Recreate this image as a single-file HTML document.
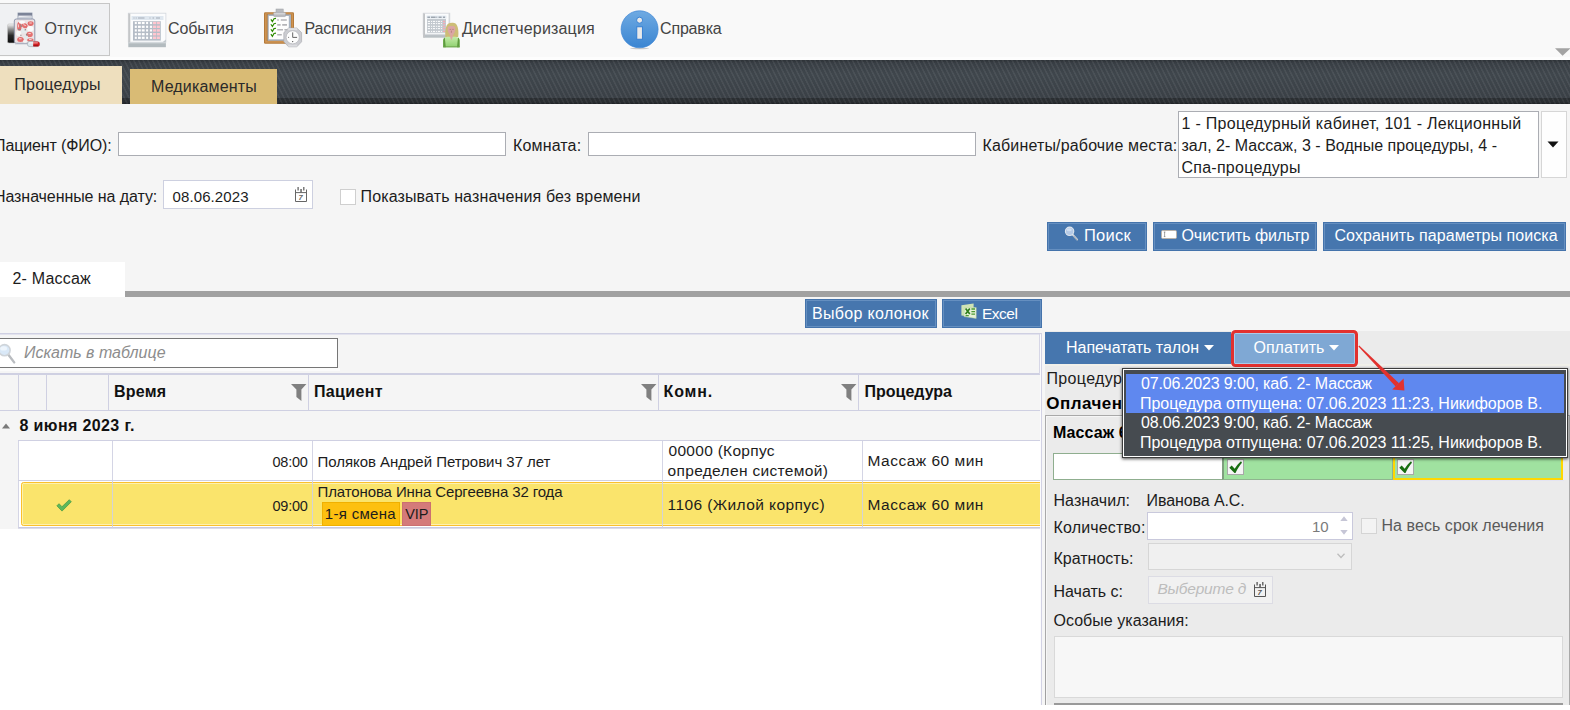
<!DOCTYPE html><html lang="ru"><head><meta charset="utf-8"><title>Отпуск процедур</title><style>
html,body{margin:0;padding:0;}
body{width:1570px;height:710px;overflow:hidden;position:relative;background:#f5f5f5;font-family:"Liberation Sans", sans-serif;}
#root{position:absolute;left:0;top:0;width:1570px;height:710px;overflow:hidden;}
#root div{position:absolute;box-sizing:border-box;}
#root svg{position:absolute;overflow:visible;}
.t{position:absolute;white-space:nowrap;line-height:1;}
</style></head><body><div id="root"><div style="left:0px;top:0px;width:1570px;height:60px;background:#f9f9f9;"></div>
<div style="left:-1px;top:3px;width:111px;height:53px;background:#f0f1f3;border:1px solid #c6c6c6;"></div>
<div style="left:0px;top:57px;width:1570px;height:3px;background:#fdfdfd;"></div>
<div style="left:0px;top:60px;width:1570px;height:44px;background:repeating-linear-gradient(63.4deg,rgba(255,255,255,0.055) 0,rgba(255,255,255,0.055) 1.1px,rgba(0,0,0,0.03) 1.6px,rgba(0,0,0,0.03) 3.7px,rgba(255,255,255,0.055) 4.2px),linear-gradient(#2e3338 0,#3a4046 3px,#41484e 14px,#3c4248 38px);"></div>
<div style="left:0px;top:98px;width:1570px;height:6px;background:repeating-linear-gradient(63.4deg,rgba(255,255,255,0.055) 0,rgba(255,255,255,0.055) 1.1px,rgba(0,0,0,0.03) 1.6px,rgba(0,0,0,0.03) 3.7px,rgba(255,255,255,0.055) 4.2px),linear-gradient(#2b2f33 0,#2b2f33 4px,#1f2225 6px);"></div>
<div style="left:0px;top:66px;width:122px;height:38px;background:#eedfbe;"></div>
<div style="left:130px;top:69px;width:147px;height:35px;background:#d9bb75;"></div>
<svg style="left:0;top:0" width="760" height="60" viewBox="0 0 760 60"><defs>
<linearGradient id="gcap" x1="0" y1="0" x2="0" y2="1"><stop offset="0" stop-color="#f4f4f4"/><stop offset="0.25" stop-color="#9a9a9a"/><stop offset="0.6" stop-color="#2a2a2a"/><stop offset="1" stop-color="#0c0c0c"/></linearGradient>
<linearGradient id="ginfo" x1="0" y1="0" x2="0" y2="1"><stop offset="0" stop-color="#6faae2"/><stop offset="1" stop-color="#3a85d2"/></linearGradient>
<linearGradient id="ggreen" x1="0" y1="0" x2="0" y2="1"><stop offset="0" stop-color="#c4eca8"/><stop offset="1" stop-color="#8fd070"/></linearGradient>
<linearGradient id="gclip" x1="0" y1="0" x2="0" y2="1"><stop offset="0" stop-color="#e2e2e4"/><stop offset="1" stop-color="#a9abb0"/></linearGradient>
</defs><g>
<filter id="fb" x="-20%" y="-20%" width="140%" height="140%"><feGaussianBlur stdDeviation="0.35"/></filter>
<rect x="7.5" y="24" width="8" height="19" rx="1.5" fill="url(#gcap)" stroke="#c2c2c2" stroke-width="0.6"/>
<rect x="18" y="13" width="14" height="7.5" fill="#eceef3" stroke="#8c94a8" stroke-width="0.8"/>
<rect x="18" y="13" width="14" height="2.6" fill="#7c8498"/>
<path d="M18.6 17.2l12.8-1.2v2.4l-12.8 0.6z" fill="#cdd1da"/>
<rect x="14.3" y="19" width="20.5" height="24.3" rx="2" fill="#ebe2e4" stroke="#8690a6" stroke-width="0.9"/>
<g filter="url(#fb)">
<ellipse cx="19.3" cy="26.5" rx="2.2" ry="4.4" fill="#e26c6c"/>
<ellipse cx="24.6" cy="25.6" rx="3.2" ry="2.4" fill="#e47070" transform="rotate(28 24.6 25.6)"/>
<ellipse cx="30.6" cy="23.6" rx="3" ry="2.3" fill="#e26c6c"/>
<ellipse cx="22" cy="22.3" rx="3" ry="1.5" fill="#fafafa"/>
<ellipse cx="30.3" cy="28.8" rx="3.2" ry="2.7" fill="#fbfbfb"/>
<ellipse cx="24" cy="31.2" rx="2.8" ry="2.4" fill="#e6ebed"/>
<ellipse cx="29.6" cy="34.4" rx="3.2" ry="2.6" fill="#e47070"/>
<ellipse cx="18.6" cy="33.2" rx="2.6" ry="2.8" fill="#f7f7f7"/>
<ellipse cx="20.5" cy="39.4" rx="3.3" ry="2.5" fill="#e26c6c"/>
<ellipse cx="25.8" cy="37.3" rx="2.4" ry="2" fill="#e4e9eb"/>
<ellipse cx="30.4" cy="39.9" rx="3.2" ry="1.7" fill="#e07272"/>
<ellipse cx="25" cy="41.4" rx="2" ry="1.3" fill="#f4f4f4"/>
<path d="M20.8 24.6l0.6 2.6M20.6 29.6h-2.4M26 29.6l-1.4 0.4M26.2 34l1 1.6M20.6 34.8l0.6 1" stroke="#8f8585" stroke-width="1.1" fill="none"/><path d="M18.4 24.4v3M23.4 24.6l2.4 1M29.4 23h2.4M28.4 33.6h2.4M19 38.8h2.6M29 39.4h2.6" stroke="#f7d6d6" stroke-width="1" fill="none"/>
</g>
<rect x="27.3" y="41.4" width="12.4" height="5.2" rx="2.6" fill="#dbe6ec" stroke="#8f9aa2" stroke-width="0.5"/>
<path d="M33.2 41.4h3.9a2.6 2.6 0 0 1 0 5.2h-3.9z" fill="#d21e22"/>
<rect x="28.5" y="42.2" width="9.5" height="1.2" rx="0.6" fill="#fff" opacity="0.55"/>
<rect x="33.2" y="45" width="5" height="1.2" rx="0.6" fill="#7a0c10" opacity="0.55"/>
<rect x="15" y="43.7" width="12.5" height="0.9" fill="#c9ccd2" opacity="0.8"/>
</g><g><rect x="128.3" y="41" width="37.6" height="6.2" fill="#b3bbbf"/><rect x="128.3" y="41" width="37.6" height="2.4" fill="#cfd5d8"/><rect x="128.3" y="13.2" width="37.6" height="29" fill="#fbfcfd" stroke="#d3d7dc" stroke-width="0.8"/><rect x="128.3" y="13.5" width="2" height="29" fill="#c4c6c8"/><rect x="131.5" y="16" width="32" height="4" fill="#dfe7ef"/><path d="M133.5 18h1M135.7 18h1M138 18h6.5M149.5 18h1M152.5 18h1.6M156 18h4" stroke="#a3acb7" stroke-width="1.2"/><rect x="133" y="21.2" width="27.8" height="19.4" fill="#b5bdc7"/><rect x="134.8" y="21.9" width="2" height="2.2" fill="#fff"/><rect x="138.0" y="21.9" width="2.8" height="2.2" fill="#fff"/><rect x="141.8" y="21.9" width="2.8" height="2.2" fill="#fff"/><rect x="146.1" y="21.9" width="2" height="2.2" fill="#fff"/><rect x="149.9" y="21.9" width="2.2" height="2.2" fill="#fff"/><rect x="153.0" y="21.8" width="3.1" height="2.4" fill="#ffc6cf"/><rect x="156.8" y="21.8" width="3.1" height="2.4" fill="#ffc6cf"/><rect x="134.8" y="25.7" width="2" height="2.2" fill="#fff"/><rect x="138.0" y="25.7" width="2.8" height="2.2" fill="#fff"/><rect x="141.8" y="25.7" width="2.8" height="2.2" fill="#fff"/><rect x="146.1" y="25.7" width="2" height="2.2" fill="#fff"/><rect x="149.9" y="25.7" width="2.2" height="2.2" fill="#fff"/><rect x="153.0" y="25.6" width="3.1" height="2.4" fill="#ffc6cf"/><rect x="156.8" y="25.6" width="3.1" height="2.4" fill="#ffc6cf"/><rect x="134.8" y="29.3" width="2" height="2.2" fill="#fff"/><rect x="138.0" y="29.3" width="2.8" height="2.2" fill="#fff"/><rect x="141.8" y="29.3" width="2.8" height="2.2" fill="#fff"/><rect x="146.1" y="29.3" width="2" height="2.2" fill="#fff"/><rect x="149.9" y="29.3" width="2.2" height="2.2" fill="#fff"/><rect x="153.0" y="29.2" width="3.1" height="2.4" fill="#ffc6cf"/><rect x="156.8" y="29.2" width="3.1" height="2.4" fill="#ffc6cf"/><rect x="134.8" y="33.1" width="2" height="2.2" fill="#fff"/><rect x="138.0" y="33.1" width="2.8" height="2.2" fill="#fff"/><rect x="141.8" y="33.1" width="2.8" height="2.2" fill="#fff"/><rect x="146.1" y="33.1" width="2" height="2.2" fill="#fff"/><rect x="149.9" y="33.1" width="2.2" height="2.2" fill="#fff"/><rect x="153.0" y="33.0" width="3.1" height="2.4" fill="#ffc6cf"/><rect x="156.8" y="33.0" width="3.1" height="2.4" fill="#ffc6cf"/><rect x="134.8" y="36.7" width="2" height="2.2" fill="#fff"/><rect x="138.0" y="36.7" width="2.8" height="2.2" fill="#fff"/><rect x="141.8" y="36.7" width="2.8" height="2.2" fill="#fff"/><rect x="146.1" y="36.7" width="2" height="2.2" fill="#fff"/><rect x="149.9" y="36.7" width="2.2" height="2.2" fill="#fff"/><rect x="153.0" y="36.6" width="3.1" height="2.4" fill="#ffc6cf"/><rect x="156.8" y="36.6" width="3.1" height="2.4" fill="#ffc6cf"/><path d="M162.5 42.2l3.4-2.6v2.6z" fill="#c2c8cc"/></g><g>
<rect x="264" y="12.2" width="30" height="31.6" rx="1.2" fill="#b47a3a"/>
<rect x="265.2" y="13.4" width="27.6" height="29.2" fill="#d59a58"/>
<rect x="266.6" y="14" width="25" height="27.2" fill="#b07636"/>
<rect x="267.6" y="14.4" width="23.4" height="26.4" fill="#a9b4c2"/>
<rect x="268.8" y="16" width="20" height="23.3" fill="#fdfdfd"/>
<rect x="276" y="9" width="7.2" height="4" fill="#b9bbbf" stroke="#9d9fa4" stroke-width="0.5"/>
<rect x="273.6" y="12.4" width="12" height="4.2" rx="0.8" fill="url(#gclip)" stroke="#9b9da3" stroke-width="0.5"/>
<path d="M270.9 19.4l1.5 2.2 1.6-2.8 2-0.4M270.9 24.3l1.5 2.2 1.6-2.8 2-0.4M270.9 29.2l1.5 2.2 1.6-2.8 2-0.4M270.9 34.1l1.5 2.2 1.6-2.8 2-0.4" stroke="#2c8a00" stroke-width="1.15" fill="none"/>
<path d="M277.2 20h1.6M280.8 20h6M277.2 24.9h3.4M282.2 24.9h4.8M277.2 29.8h5.8M284.4 29.8h3M277.2 34.7h4.6" stroke="#b4b4b8" stroke-width="1.6"/>
<path d="M288.6 28h8.2l4.8 4.6v9.2l-4.8 5h-8.2l-4.8-5v-9.2z" fill="#cbccd1" stroke="#a3a5aa" stroke-width="0.6"/>
<rect x="288.2" y="28.2" width="9" height="2" fill="#e1e2e5"/><rect x="288.2" y="44.6" width="9" height="2" fill="#dcdde0"/>
<circle cx="292.7" cy="37.3" r="6.6" fill="#fdfdfd" stroke="#b7b9be" stroke-width="0.8"/>
<path d="M292.7 32.4v5h4.4" stroke="#555" stroke-width="0.9" fill="none"/>
<circle cx="292.7" cy="41.6" r="0.6" fill="#333"/><circle cx="288.6" cy="37.3" r="0.5" fill="#555"/>
</g><g><rect x="423.2" y="33.5" width="26.6" height="4.2" fill="#b9c0c4"/><rect x="423.2" y="33.5" width="26.6" height="1.6" fill="#d5dadd"/><rect x="423.2" y="13.2" width="26.6" height="21" fill="#fbfcfd" stroke="#d0d4d9" stroke-width="0.8"/><rect x="423.2" y="13.5" width="1.8" height="24" fill="#c2c4c6"/><rect x="448.6" y="13.5" width="1.2" height="21" fill="#d2d4d6"/><rect x="426.6" y="15.6" width="19.8" height="3" fill="#e2e8ef"/><path d="M427.4 17.2h2.6M431 17.2h4.6M436.4 17.2h0.8M438.6 17.2h3M443 17.2h2" stroke="#7f8893" stroke-width="1"/><rect x="427" y="19" width="19" height="13.8" fill="#c3c9cf"/><rect x="427.8" y="20.9" width="2.2" height="1" fill="#fff"/><rect x="431.0" y="20.9" width="1" height="1" fill="#fff"/><rect x="432.9" y="20.9" width="2.2" height="1" fill="#fff"/><rect x="436.1" y="20.9" width="1" height="1" fill="#fff"/><rect x="437.9" y="20.9" width="2.2" height="1" fill="#fff"/><rect x="441.1" y="20.9" width="1" height="1" fill="#fff"/><rect x="443.0" y="20.8" width="2.1" height="1.2" fill="#f5a8b2"/><rect x="427.8" y="23.1" width="2.2" height="1" fill="#fff"/><rect x="431.0" y="23.1" width="1" height="1" fill="#fff"/><rect x="432.9" y="23.1" width="2.2" height="1" fill="#fff"/><rect x="436.1" y="23.1" width="1" height="1" fill="#fff"/><rect x="437.9" y="23.1" width="2.2" height="1" fill="#fff"/><rect x="441.1" y="23.1" width="1" height="1" fill="#fff"/><rect x="443.0" y="23.0" width="2.1" height="1.2" fill="#f5a8b2"/><rect x="427.8" y="25.8" width="2.2" height="1" fill="#fff"/><rect x="431.0" y="25.8" width="1" height="1" fill="#fff"/><rect x="432.9" y="25.8" width="2.2" height="1" fill="#fff"/><rect x="436.1" y="25.8" width="1" height="1" fill="#fff"/><rect x="437.9" y="25.8" width="2.2" height="1" fill="#fff"/><rect x="441.1" y="25.8" width="1" height="1" fill="#fff"/><rect x="443.0" y="25.7" width="2.1" height="1.2" fill="#f5a8b2"/><rect x="427.8" y="28.1" width="2.2" height="1" fill="#fff"/><rect x="431.0" y="28.1" width="1" height="1" fill="#fff"/><rect x="432.9" y="28.1" width="2.2" height="1" fill="#fff"/><rect x="436.1" y="28.1" width="1" height="1" fill="#fff"/><rect x="437.9" y="28.1" width="2.2" height="1" fill="#fff"/><rect x="441.1" y="28.1" width="1" height="1" fill="#fff"/><rect x="443.0" y="28.0" width="2.1" height="1.2" fill="#f5a8b2"/><rect x="427.8" y="30.9" width="2.2" height="1" fill="#fff"/><rect x="431.0" y="30.9" width="1" height="1" fill="#fff"/><rect x="432.9" y="30.9" width="2.2" height="1" fill="#fff"/><rect x="436.1" y="30.9" width="1" height="1" fill="#fff"/><rect x="437.9" y="30.9" width="2.2" height="1" fill="#fff"/><rect x="441.1" y="30.9" width="1" height="1" fill="#fff"/><rect x="443.0" y="30.8" width="2.1" height="1.2" fill="#f5a8b2"/><path d="M445.4 37c-0.6-5 0.2-11.4 2.6-13.2 2.2-1.4 6-1.4 7.8 0 2.4 2 3 8.4 2.4 13.2z" fill="#cdbd76"/><path d="M447.8 27.2c0.6-1.6 6.6-1.6 7.3 0 0.5 2.6-0.2 5.4-1.4 6.6l-0.6 1.6h-3.2l-0.6-1.6c-1.2-1.2-2-4-1.5-6.6z" fill="#dba6a4"/><path d="M449.6 29.4h1.6M452.2 29.4h1.6M451.4 30.6v2.2" stroke="#b97f80" stroke-width="0.9" fill="none"/><path d="M443.2 47.2v-6.6c0-2.2 1.6-3.6 4.2-3.9h8c2.6 0.3 4.2 1.7 4.2 3.9v6.6z" fill="url(#ggreen)"/><path d="M443.2 47.2v-6.6c0-1.4 0.6-2.4 1.6-3.1l1 9.7zM459.6 47.2v-6.6c0-1.4-0.6-2.4-1.6-3.1l-1 9.7z" fill="#5e9c3e"/><path d="M449.6 35.4l1.8 5 1.8-5z" fill="#dba6a4"/><rect x="443.2" y="46.4" width="16.4" height="0.9" fill="#6aa04a"/></g><g>
<ellipse cx="639.6" cy="48.6" rx="9.6" ry="0.7" fill="#c9c9c9"/>
<circle cx="639.6" cy="29.3" r="18.5" fill="url(#ginfo)" stroke="#3f86d6" stroke-width="0.7"/>
<circle cx="639.6" cy="20.2" r="3" fill="#e9e9e9" stroke="#2d7ad2" stroke-width="0.9"/>
<rect x="636.8" y="26.8" width="5.6" height="12.4" fill="#e9e9e9" stroke="#2d7ad2" stroke-width="0.9"/>
</g></svg>
<svg style="left:1555px;top:48px" width="16" height="9"><path d="M0 0.3H15.4L7.6 7.8Z" fill="#a3a3a3"/></svg>
<div style="left:118px;top:132px;width:388px;height:24px;background:#fff;border:1px solid #abadb3;"></div>
<div style="left:588px;top:132px;width:388px;height:24px;background:#fff;border:1px solid #abadb3;"></div>
<div style="left:1178px;top:111px;width:361px;height:67px;background:#fff;border:1px solid #abadb3;"></div>
<div style="left:1541px;top:111px;width:26px;height:67px;background:#fefefe;border:1px solid #d6d6d6;"></div>
<svg style="left:1547px;top:141px" width="12" height="7"><path d="M0.5 0.5H11.5L6 6.5Z" fill="#111"/></svg>
<div style="left:163px;top:180px;width:150px;height:29px;background:#fff;border:1px solid #cdd0e0;"></div>
<div style="left:340px;top:189px;width:16px;height:16px;background:#fff;border:1px solid #cfcfcf;"></div>
<div style="left:1047px;top:222px;width:100px;height:29px;background:#4676ae;border:1px solid #4473ab;box-shadow:inset 0 0 0 1px #658fc0;"></div>
<div style="left:1153px;top:222px;width:164px;height:29px;background:#4676ae;border:1px solid #4473ab;box-shadow:inset 0 0 0 1px #658fc0;"></div>
<div style="left:1323px;top:222px;width:243px;height:29px;background:#4676ae;border:1px solid #4473ab;box-shadow:inset 0 0 0 1px #658fc0;"></div>
<div style="left:0px;top:262px;width:125px;height:35px;background:#fff;"></div>
<div style="left:125px;top:291px;width:1445px;height:6px;background:#a1a1a1;"></div>
<div style="left:805px;top:299px;width:132px;height:29px;background:#4676ae;border:1px solid #4473ab;box-shadow:inset 0 0 0 1px #658fc0;"></div>
<div style="left:942px;top:299px;width:100px;height:29px;background:#4676ae;border:1px solid #4473ab;box-shadow:inset 0 0 0 1px #658fc0;"></div>
<div style="left:0px;top:333px;width:1042px;height:1px;background:#cfd0e2;"></div>
<div style="left:0px;top:334px;width:1040px;height:1px;background:#e3e3ee;"></div>
<div style="left:0px;top:373px;width:1040px;height:2px;background:#cfd0e2;"></div>
<div style="left:1039px;top:334px;width:1px;height:40px;background:#d6d6e6;"></div>
<div style="left:0px;top:368px;width:340px;height:3px;background:#fbfbfb;"></div>
<div style="left:-2px;top:338px;width:340px;height:30px;background:#fff;border:1px solid #767676;"></div>
<div style="left:18px;top:375px;width:1px;height:35px;background:#cfd0e2;"></div>
<div style="left:46px;top:375px;width:1px;height:35px;background:#cfd0e2;"></div>
<div style="left:108px;top:375px;width:1px;height:35px;background:#cfd0e2;"></div>
<div style="left:308px;top:375px;width:1px;height:35px;background:#cfd0e2;"></div>
<div style="left:658px;top:375px;width:1px;height:35px;background:#cfd0e2;"></div>
<div style="left:858px;top:375px;width:1px;height:35px;background:#cfd0e2;"></div>
<div style="left:0px;top:410px;width:1040px;height:1px;background:#cfd0e2;"></div>
<svg style="left:2px;top:423px" width="8" height="6"><path d="M0 5.5L4 0.5L8 5.5Z" fill="#7a7a7a"/></svg>
<div style="left:18px;top:440px;width:1022px;height:1px;background:#cfd0e2;"></div>
<div style="left:18px;top:441px;width:1022px;height:39px;background:#fff;"></div>
<div style="left:18px;top:480px;width:1022px;height:1px;background:#cfd0e2;"></div>
<div style="left:18px;top:481px;width:1022px;height:46px;background:#fff;"></div>
<div style="left:21px;top:482px;width:1024px;height:44px;background:#fae46c;border:1px solid #fbc02d;border-radius:2.5px;box-shadow:inset 0 0 0 1px #fdf1b0;"></div>
<div style="left:18px;top:527px;width:1022px;height:1px;background:#c9cade;"></div>
<div style="left:18px;top:528px;width:1022px;height:1px;background:#dcdcea;"></div>
<div style="left:0px;top:529px;width:1040px;height:181px;background:#fff;"></div>
<div style="left:18px;top:441px;width:1px;height:87px;background:#cfd0e2;opacity:0.9;"></div>
<div style="left:112px;top:441px;width:1px;height:87px;background:#cfd0e2;opacity:0.9;"></div>
<div style="left:312px;top:441px;width:1px;height:87px;background:#cfd0e2;opacity:0.9;"></div>
<div style="left:662px;top:441px;width:1px;height:87px;background:#cfd0e2;opacity:0.9;"></div>
<div style="left:862px;top:441px;width:1px;height:87px;background:#cfd0e2;opacity:0.9;"></div>
<div style="left:322px;top:502px;width:78px;height:24px;background:#fdc010;border:1px solid #f0b000;"></div>
<div style="left:402px;top:502px;width:29px;height:24px;background:#d47a7a;border:1px solid #cc7070;"></div>
<svg style="left:56px;top:499px" width="16" height="13" viewBox="0 0 16 13"><path d="M0.9 6.8L3 4.7L6 7.7L13.3 0.7L15.3 2.8L6 12.1Z" fill="#5cb85c" stroke="#3f973f" stroke-width="0.7"/></svg>
<div style="left:1040px;top:335px;width:1px;height:370px;background:#fbfbfd;"></div>
<div style="left:1041px;top:333px;width:1px;height:372px;background:#d2d2e4;"></div>
<div style="left:1042px;top:334px;width:3px;height:371px;background:#f6f6f6;"></div>
<div style="left:1045px;top:331px;width:525px;height:374px;background:#ebebeb;"></div>
<div style="left:1045px;top:364px;width:525px;height:2px;background:#f1f0ea;"></div>
<div style="left:1045px;top:332px;width:186px;height:32px;background:#4676ae;"></div>
<svg style="left:1204px;top:345px" width="10" height="6"><path d="M0 0H10L5 5.5Z" fill="#fff"/></svg>
<div style="left:1231px;top:330px;width:127px;height:37px;background:#7fa8d4;border:3px solid #e2312f;border-radius:4.5px;box-shadow:inset 0 0 0 1px #a9cbea;"></div>
<svg style="left:1329px;top:345px" width="10" height="6"><path d="M0 0H10L5 5.5Z" fill="#fff"/></svg>
<div style="left:1045px;top:415px;width:525px;height:295px;background:#ebebeb;border:1px solid #a9a9a9;box-shadow:inset 1px 1px 0 #f6f6f6;"></div>
<div style="left:1053px;top:453px;width:171px;height:27px;background:#fff;border:1px solid #8fae8f;"></div>
<div style="left:1222px;top:453px;width:171px;height:27px;background:#a0e2a0;border:1px solid #8fb48f;border-left:2px solid #7f9f7f;"></div>
<div style="left:1393px;top:453px;width:170px;height:27px;background:#a0e2a0;border:2px solid #ffd700;"></div>
<div style="left:1393px;top:480px;width:171px;height:1px;background:#e4e4f2;"></div>
<div style="left:1227px;top:459px;width:17px;height:16px;background:#f5f5f5;border:1px solid #a8a8a8;"></div>
<div style="left:1397px;top:459px;width:17px;height:16px;background:#f5f5f5;border:1px solid #a8a8a8;"></div>
<svg style="left:1228px;top:459px" width="16" height="16" viewBox="0 0 16 16"><path d="M1.3 8.7L3.7 6.6L6.7 9.8C8.4 6.9 10.4 4.5 13 2.3L14 3.7C11.4 6.6 9.5 9.7 7.5 14.1L6.5 14.1Z" fill="#176d10"/></svg>
<svg style="left:1398px;top:459px" width="16" height="16" viewBox="0 0 16 16"><path d="M1.3 8.7L3.7 6.6L6.7 9.8C8.4 6.9 10.4 4.5 13 2.3L14 3.7C11.4 6.6 9.5 9.7 7.5 14.1L6.5 14.1Z" fill="#176d10"/></svg>
<div style="left:1147px;top:512px;width:206px;height:28px;background:#fff;border:1px solid #c9c9dc;"></div>
<svg style="left:1340px;top:516px" width="8" height="19"><path d="M0.3 5L4 0.2L7.7 5Z M0.3 14L4 18.8L7.7 14Z" fill="#c6c6d6"/></svg>
<div style="left:1361px;top:518px;width:16px;height:16px;background:#f3f3f3;border:1px solid #d4d4d4;"></div>
<div style="left:1148px;top:543px;width:204px;height:27px;background:#f0f0f0;border:1px solid #d6d6d6;"></div>
<svg style="left:1337px;top:553px" width="8" height="6"><path d="M0.5 0.8L4 4.5L7.5 0.8" fill="none" stroke="#bdbdbd" stroke-width="1.3"/></svg>
<div style="left:1148px;top:576px;width:125px;height:28px;background:#f1f1f1;border:1px solid #dcdce4;"></div>
<div style="left:1054px;top:636px;width:509px;height:62px;background:#f7f7f7;border:1px solid #d9d9d9;"></div>
<div style="left:1054px;top:703px;width:509px;height:2px;background:#9a9a9a;"></div>
<div style="left:1045px;top:660px;width:1px;height:45px;background:#a0a0a0;"></div>
<div style="left:0px;top:705px;width:1570px;height:5px;background:#fff;z-index:9;"></div>
<div style="left:1122px;top:368px;width:446px;height:90px;background:#464b50;border:1px solid #3c3c3c;box-shadow:inset 0 0 0 1px #fff,0 1px 3px rgba(0,0,0,0.7);z-index:5;"></div>
<div style="left:1126px;top:374px;width:438px;height:39px;background:#5f88ef;z-index:6;"></div>
<svg style="left:0;top:0;z-index:8" width="1570" height="710"><path d="M1359.2 345.6L1358.4 346.6L1395.6 386.4L1399 383.2Z" fill="#e2322f"/><path d="M1404.4 390.4L1403.6 378.4L1392.2 389.6Z" fill="#e2322f"/></svg>
<svg style="left:295px;top:187px" width="12" height="15" viewBox="0 0 12 15"><path d="M0.5 2.5V14.5H11.5V2.5M0.5 5.6H11.5" fill="none" stroke="#666" stroke-width="1"/><path d="M3.1 0V3.6M8.8 0V3.6" stroke="#666" stroke-width="1.3"/><rect x="5.3" y="2" width="1.5" height="3.4" fill="#666"/><text x="3.6" y="12.8" font-family="Liberation Sans, sans-serif" font-size="7.5" font-weight="700" font-style="italic" fill="#666">7</text></svg>
<svg style="left:1254px;top:582px" width="12" height="15" viewBox="0 0 12 15"><path d="M0.5 2.5V14.5H11.5V2.5M0.5 5.6H11.5" fill="none" stroke="#555" stroke-width="1"/><path d="M3.1 0V3.6M8.8 0V3.6" stroke="#555" stroke-width="1.3"/><rect x="5.3" y="2" width="1.5" height="3.4" fill="#555"/><text x="3.6" y="12.8" font-family="Liberation Sans, sans-serif" font-size="7.5" font-weight="700" font-style="italic" fill="#555">7</text></svg>
<svg style="left:290.7px;top:384px" width="16" height="18" viewBox="0 0 16 18"><path d="M0 0H15.4L10.4 5.6V17L5.4 13V5.6Z" fill="#808080"/></svg>
<svg style="left:640.8px;top:384px" width="16" height="18" viewBox="0 0 16 18"><path d="M0 0H15.4L10.4 5.6V17L5.4 13V5.6Z" fill="#808080"/></svg>
<svg style="left:841px;top:384px" width="16" height="18" viewBox="0 0 16 18"><path d="M0 0H15.4L10.4 5.6V17L5.4 13V5.6Z" fill="#808080"/></svg>
<svg style="left:-3px;top:343px" width="20" height="22" viewBox="0 0 20 22"><path d="M11.6 12L17.2 19.4" stroke="#b9bcc0" stroke-width="2.4" stroke-linecap="round"/><circle cx="7.5" cy="7.2" r="5.6" fill="#d9e8f7" stroke="#cfd4d9" stroke-width="1.6"/><ellipse cx="6.6" cy="5.4" rx="3.4" ry="2.2" fill="#eef5fc"/></svg>
<svg style="left:1063px;top:225px" width="17" height="18" viewBox="0 0 17 18"><path d="M9.6 9.6L14.2 14.6" stroke="#d8dde3" stroke-width="1.8" stroke-linecap="round"/><path d="M10.4 10.8L14.6 15.4" stroke="#6b7785" stroke-width="0.7"/><circle cx="6.6" cy="6.3" r="4.2" fill="#b4c9e6" stroke="#dfe6ee" stroke-width="1.1"/><ellipse cx="6.2" cy="4.8" rx="2.6" ry="1.5" fill="#cfdef2"/></svg>
<svg style="left:1161px;top:230px" width="16" height="9" viewBox="0 0 16 9"><rect x="0.5" y="0.5" width="15" height="8" rx="1.2" fill="#fff" stroke="#b9b2aa" stroke-width="1"/><path d="M3.6 2V6.6M2.8 2H4.4M2.8 6.6H4.4" stroke="#666" stroke-width="0.6" fill="none"/></svg>
<svg style="left:961px;top:303px" width="16" height="16" viewBox="0 0 16 16"><path d="M0.4 2.2L12.6 0.4V13.8L0.4 12.4Z" fill="#cfe4b4"/><path d="M3.4 4.6H15.2V15.4L3 13.6Z" fill="#e6f2d6" stroke="#b7cf9a" stroke-width="0.5"/><path d="M4.6 5.6L8.8 11M8.8 5.6L4.6 11" stroke="#2f7d1c" stroke-width="1.7"/><path d="M10.4 6h3.6M10.4 8.6h3.6M10.4 11.2h3.6M4.6 12.6h3.2" stroke="#4e9a35" stroke-width="1.3"/></svg>
<span class="t" style="left:14.3px;top:77px;font-size:16px;color:#2a2a2a;letter-spacing:0.238px;">Процедуры</span>
<span class="t" style="left:151px;top:79px;font-size:16px;color:#2a2a2a;letter-spacing:0.150px;">Медикаменты</span>
<span class="t" style="left:44.5px;top:21px;font-size:16px;color:#444;letter-spacing:0.300px;">Отпуск</span>
<span class="t" style="left:168px;top:21px;font-size:16px;color:#444;letter-spacing:-0.083px;">События</span>
<span class="t" style="left:304.5px;top:21px;font-size:16px;color:#444;letter-spacing:-0.111px;">Расписания</span>
<span class="t" style="left:462px;top:21px;font-size:16px;color:#444;letter-spacing:0.179px;">Диспетчеризация</span>
<span class="t" style="left:660px;top:21px;font-size:16px;color:#444;letter-spacing:-0.167px;">Справка</span>
<span class="t" style="left:-6px;top:138px;font-size:16px;color:#1c1c1c;letter-spacing:-0.115px;">Пациент (ФИО):</span>
<span class="t" style="left:513px;top:138px;font-size:16px;color:#1c1c1c;letter-spacing:0.143px;">Комната:</span>
<span class="t" style="left:982.5px;top:138px;font-size:16px;color:#1c1c1c;letter-spacing:0.159px;">Кабинеты/рабочие места:</span>
<span class="t" style="left:1181.5px;top:116px;font-size:16px;color:#1c1c1c;letter-spacing:0.287px;">1 - Процедурный кабинет, 101 - Лекционный</span>
<span class="t" style="left:1181.5px;top:138px;font-size:16px;color:#1c1c1c;letter-spacing:0.025px;">зал, 2- Массаж, 3 - Водные процедуры, 4 -</span>
<span class="t" style="left:1181.5px;top:160px;font-size:16px;color:#1c1c1c;letter-spacing:0.250px;">Спа-процедуры</span>
<span class="t" style="left:-6px;top:189px;font-size:16px;color:#1c1c1c;letter-spacing:-0.079px;">Назначенные на дату:</span>
<span class="t" style="left:172.5px;top:189px;font-size:15px;color:#1c1c1c;letter-spacing:0.111px;">08.06.2023</span>
<span class="t" style="left:360.5px;top:189px;font-size:16px;color:#1c1c1c;letter-spacing:0.125px;">Показывать назначения без времени</span>
<span class="t" style="left:1084px;top:227px;font-size:16.5px;color:#fff;letter-spacing:0.250px;">Поиск</span>
<span class="t" style="left:1181.5px;top:228px;font-size:16px;color:#fff;letter-spacing:-0.071px;">Очистить фильтр</span>
<span class="t" style="left:1334.5px;top:228px;font-size:16px;color:#fff;letter-spacing:0.060px;">Сохранить параметры поиска</span>
<span class="t" style="left:12.5px;top:271px;font-size:16px;color:#1c1c1c;letter-spacing:0.188px;">2- Массаж</span>
<span class="t" style="left:812px;top:306px;font-size:16px;color:#fff;letter-spacing:0.333px;">Выбор колонок</span>
<span class="t" style="left:982px;top:306px;font-size:15.5px;color:#fff;letter-spacing:-0.500px;">Excel</span>
<span class="t" style="left:24px;top:345px;font-size:16px;color:#8d8d8d;font-style:italic;letter-spacing:0.000px;">Искать в таблице</span>
<span class="t" style="left:114px;top:384px;font-size:16px;color:#111;font-weight:700;letter-spacing:0.250px;">Время</span>
<span class="t" style="left:314px;top:384px;font-size:16px;color:#111;font-weight:700;letter-spacing:0.333px;">Пациент</span>
<span class="t" style="left:663.5px;top:384px;font-size:16px;color:#111;font-weight:700;letter-spacing:0.875px;">Комн.</span>
<span class="t" style="left:864.5px;top:384px;font-size:16px;color:#111;font-weight:700;letter-spacing:0.000px;">Процедура</span>
<span class="t" style="left:19.5px;top:418px;font-size:16px;color:#111;font-weight:700;letter-spacing:0.385px;">8 июня 2023 г.</span>
<span class="t" style="left:272.5px;top:455px;font-size:14.5px;color:#1c1c1c;letter-spacing:-0.250px;">08:00</span>
<span class="t" style="left:317.5px;top:454px;font-size:15px;color:#1c1c1c;letter-spacing:-0.034px;">Поляков Андрей Петрович 37 лет</span>
<span class="t" style="left:668.5px;top:443px;font-size:15.5px;color:#1c1c1c;letter-spacing:0.292px;">00000 (Корпус</span>
<span class="t" style="left:667.5px;top:463px;font-size:15.5px;color:#1c1c1c;letter-spacing:0.333px;">определен системой)</span>
<span class="t" style="left:867.5px;top:453px;font-size:15.5px;color:#1c1c1c;letter-spacing:0.500px;">Массаж 60 мин</span>
<span class="t" style="left:272.5px;top:499px;font-size:14.5px;color:#1c1c1c;letter-spacing:-0.250px;">09:00</span>
<span class="t" style="left:317.5px;top:484px;font-size:15px;color:#1c1c1c;letter-spacing:-0.113px;">Платонова Инна Сергеевна 32 года</span>
<span class="t" style="left:324.8px;top:506px;font-size:15px;color:#1c1c1c;letter-spacing:0.312px;">1-я смена</span>
<span class="t" style="left:405.2px;top:507px;font-size:14.5px;color:#1c1c1c;letter-spacing:-0.100px;">VIP</span>
<span class="t" style="left:667.5px;top:497px;font-size:15.5px;color:#1c1c1c;letter-spacing:0.417px;">1106 (Жилой корпус)</span>
<span class="t" style="left:867.5px;top:497px;font-size:15.5px;color:#1c1c1c;letter-spacing:0.500px;">Массаж 60 мин</span>
<span class="t" style="left:1066px;top:340px;font-size:16px;color:#fff;letter-spacing:-0.033px;">Напечатать талон</span>
<span class="t" style="left:1253.5px;top:340px;font-size:16px;color:#fff;letter-spacing:0.000px;">Оплатить</span>
<span class="t" style="left:1046.5px;top:371px;font-size:16px;color:#1c1c1c;letter-spacing:0.357px;">Процедура:</span>
<span class="t" style="left:1046.3px;top:395px;font-size:17px;color:#000;font-weight:700;letter-spacing:0.450px;">Оплачено:</span>
<span class="t" style="left:1053px;top:425px;font-size:16px;color:#000;font-weight:700;letter-spacing:0.100px;">Массаж 60 мин</span>
<span class="t" style="left:1053.5px;top:493px;font-size:16px;color:#1c1c1c;letter-spacing:0.062px;">Назначил:</span>
<span class="t" style="left:1146.5px;top:493px;font-size:16px;color:#1c1c1c;letter-spacing:-0.091px;">Иванова А.С.</span>
<span class="t" style="left:1053.5px;top:520px;font-size:16px;color:#1c1c1c;letter-spacing:0.150px;">Количество:</span>
<span class="t" style="left:1312px;top:519px;font-size:15px;color:#7a7a7a;letter-spacing:0.000px;">10</span>
<span class="t" style="left:1381.5px;top:518px;font-size:16px;color:#5a5a5a;letter-spacing:0.053px;">На весь срок лечения</span>
<span class="t" style="left:1053.5px;top:551px;font-size:16px;color:#1c1c1c;letter-spacing:0.000px;">Кратность:</span>
<span class="t" style="left:1053.5px;top:584px;font-size:16px;color:#1c1c1c;letter-spacing:0.000px;">Начать с:</span>
<span class="t" style="left:1157.5px;top:581px;font-size:15.5px;color:#bdbdbd;font-style:italic;letter-spacing:-0.222px;">Выберите д</span>
<span class="t" style="left:1053.5px;top:613px;font-size:16px;color:#1c1c1c;letter-spacing:0.033px;">Особые указания:</span>
<span class="t" style="left:1141px;top:376px;font-size:16px;color:#fff;letter-spacing:-0.150px;z-index:7;">07.06.2023 9:00, каб. 2- Массаж</span>
<span class="t" style="left:1140px;top:396px;font-size:16px;color:#fff;letter-spacing:-0.031px;z-index:7;">Процедура отпущена: 07.06.2023 11:23, Никифоров В.</span>
<span class="t" style="left:1141px;top:415px;font-size:16px;color:#fff;letter-spacing:-0.150px;z-index:7;">08.06.2023 9:00, каб. 2- Массаж</span>
<span class="t" style="left:1140px;top:435px;font-size:16px;color:#fff;letter-spacing:-0.031px;z-index:7;">Процедура отпущена: 07.06.2023 11:25, Никифоров В.</span>
</div></body></html>
